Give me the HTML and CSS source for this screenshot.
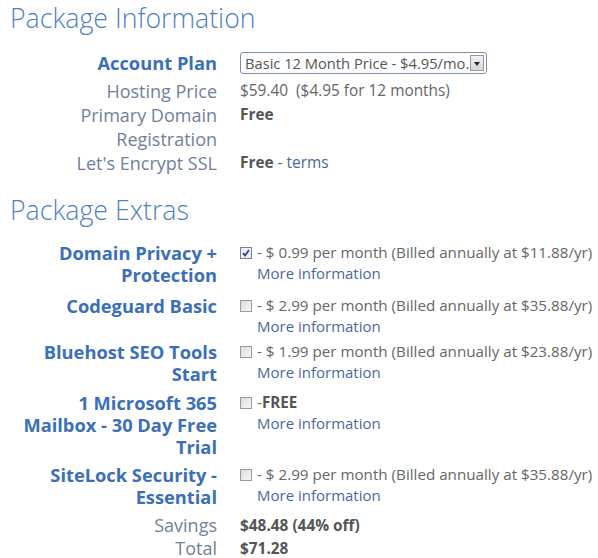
FILE: index.html
```html
<!DOCTYPE html>
<html lang="en">
  <head>
    <meta charset="UTF-8" />
    <title>Package Information</title>
    <link rel="stylesheet" href="styles.css">
  </head>
  <body>
    <div class="package">
      <h1>Package Information</h1>

      <div class="info">
        <div class="row plan-row">
          <div class="label strong">Account Plan</div>
          <div class="value">
            <div class="select">
              <span class="select-text">Basic 12 Month Price - $4.95/mo.</span>
              <span class="select-arrow"></span>
            </div>
          </div>
        </div>
        <div class="row">
          <div class="label">Hosting Price</div>
          <div class="value">$59.40&nbsp; ($4.95 for 12 months)</div>
        </div>
        <div class="row">
          <div class="label">Primary Domain Registration</div>
          <div class="value"><b>Free</b></div>
        </div>
        <div class="row">
          <div class="label">Let's Encrypt SSL</div>
          <div class="value"><b>Free</b> - <a href="#">terms</a></div>
        </div>
      </div>

      <h1 class="extras-title">Package Extras</h1>

      <div class="extras">
        <div class="row extra privacy">
          <div class="label strong">Domain Privacy + Protection</div>
          <div class="value">
            <div class="price">
              <span class="checkbox checked">
                <svg viewBox="0 0 10 10" width="10" height="10"><path d="M2 5 L4 7.5 L8 2" fill="none" stroke="#2c3f8f" stroke-width="1.8"/></svg>
              </span>
              <span>- $ 0.99 per month (Billed annually at $11.88/yr)</span>
            </div>
            <a class="more" href="#">More information</a>
          </div>
        </div>
        <div class="row extra codeguard">
          <div class="label strong">Codeguard Basic</div>
          <div class="value">
            <div class="price"><span class="checkbox"></span><span>- $ 2.99 per month (Billed annually at $35.88/yr)</span></div>
            <a class="more" href="#">More information</a>
          </div>
        </div>
        <div class="row extra seo">
          <div class="label strong">Bluehost SEO Tools Start</div>
          <div class="value">
            <div class="price"><span class="checkbox"></span><span>- $ 1.99 per month (Billed annually at $23.88/yr)</span></div>
            <a class="more" href="#">More information</a>
          </div>
        </div>
        <div class="row extra">
          <div class="label strong">1 Microsoft 365 Mailbox - 30 Day Free Trial</div>
          <div class="value">
            <div class="price"><span class="checkbox"></span><span>-<b>FREE</b></span></div>
            <a class="more" href="#">More information</a>
          </div>
        </div>
        <div class="row extra">
          <div class="label strong">SiteLock Security - Essential</div>
          <div class="value">
            <div class="price"><span class="checkbox"></span><span>- $ 2.99 per month (Billed annually at $35.88/yr)</span></div>
            <a class="more" href="#">More information</a>
          </div>
        </div>
        <div class="row">
          <div class="label">Savings</div>
          <div class="value"><b>$48.48 (44% off)</b></div>
        </div>
        <div class="row">
          <div class="label">Total</div>
          <div class="value"><b>$71.28</b></div>
        </div>
      </div>
    </div>
  </body>
</html>
```

FILE: styles.css
```css
* {
  margin: 0;
  padding: 0;
  box-sizing: border-box;
}

body {
  background-color: #fff;
  font-family: "Open Sans", sans-serif;
  color: #666;
}

.package {
  width: 598px;
  padding-left: 10px;
}

h1 {
  font-size: 26.7px;
  font-weight: 300;
  color: #5080c4;
  line-height: 36px;
}

.extras-title {
  margin-top: 17px;
}

.info {
  margin-top: 16px;
}

.extras {
  margin-top: 14px;
}

.row {
  display: grid;
  grid-template-columns: 207px 1fr;
  column-gap: 23px;
  align-items: start;
}

.label {
  text-align: right;
  font-size: 18px;
  line-height: 24px;
  color: #6f819b;
}

.label.strong {
  font-size: 18.3px;
  font-weight: 700;
  color: #3b6fb6;
  line-height: 22px;
}

.value {
  font-size: 15.4px;
  line-height: 24px;
  color: #666;
}

.value b {
  font-weight: 700;
  color: #555;
}

a {
  color: #4b67a0;
  text-decoration: none;
}

.plan-row {
  margin-bottom: 5px;
  align-items: center;
}

.select {
  display: flex;
  align-items: center;
  width: 247px;
  height: 22px;
  border: 1px solid #7d8ea8;
  border-radius: 3px;
  padding-left: 4px;
  padding-right: 2px;
}

.select-text {
  flex: 1;
  font-size: 14.7px;
  color: #555;
  white-space: nowrap;
}

.select-arrow {
  width: 14px;
  height: 16px;
  border: 1px solid #9a9a9a;
  background: linear-gradient(#f2f2f2, #d6d6d6);
  position: relative;
}

.select-arrow::after {
  content: "";
  position: absolute;
  left: 3px;
  top: 6px;
  border-left: 3px solid transparent;
  border-right: 3px solid transparent;
  border-top: 4px solid #222;
}

.extra {
  margin-bottom: 6px;
}

.extra.privacy {
  margin-bottom: 9px;
}

.extra.codeguard {
  margin-bottom: 4px;
}

.extra.seo {
  margin-bottom: 7px;
}

.extra .value {
  line-height: 21px;
}

.price {
  display: flex;
  align-items: center;
  gap: 4px;
  white-space: nowrap;
  font-size: 15.2px;
}

.checkbox {
  display: inline-flex;
  align-items: center;
  justify-content: center;
  width: 12px;
  height: 12px;
  border: 1px solid #9a9a9a;
  background: linear-gradient(135deg, #dcdcdc, #f6f6f6);
  margin-right: 1px;
}

.checkbox.checked {
  background: #eef0f6;
  border-color: #7a7f95;
}

.more {
  display: block;
  padding-left: 17px;
  font-size: 15px;
  line-height: 21px;
}

.extras > .row:not(.extra) .value {
  line-height: 23px;
}

.extras > .row:not(.extra) .label {
  line-height: 23px;
}
```
